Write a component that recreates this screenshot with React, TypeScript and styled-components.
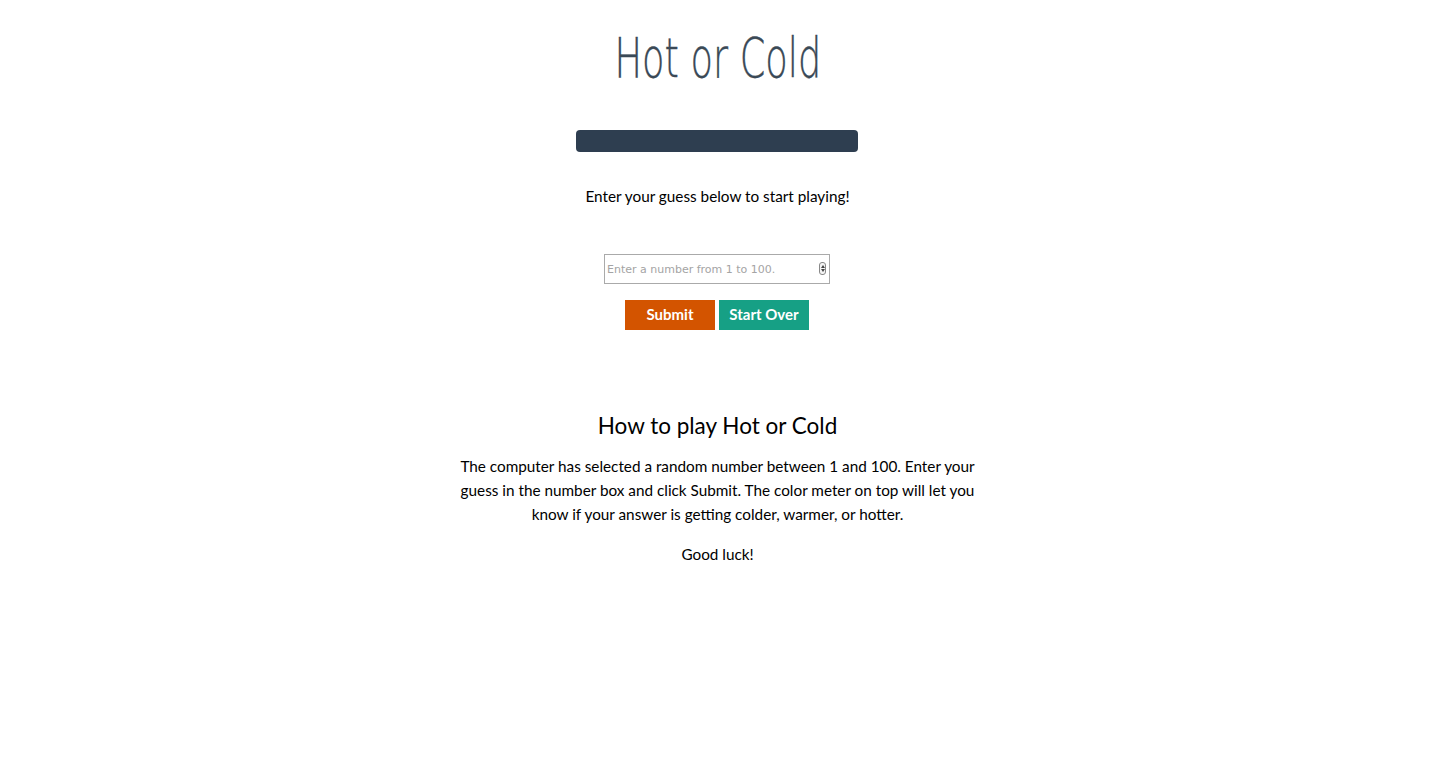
import React from "react";
import styled, { createGlobalStyle } from "styled-components";

const Global = createGlobalStyle`
  html, body { margin: 0; padding: 0; background: #fff; }
  body { font-family: "Lato", "Open Sans", sans-serif; color: #000; }
`;

const Page = styled.main`
  display: flex;
  flex-direction: column;
  align-items: center;
  text-align: center;
`;

const Title = styled.h1`
  margin: 26px 0 0;
  font-family: "DejaVu Sans ExtraLight", "DejaVu Sans", sans-serif;
  font-weight: 200;
  font-size: 56px;
  line-height: 64px;
  color: #3a4956;
  transform: scaleX(0.655);
  white-space: nowrap;
  -webkit-text-stroke: 0.4px #3a4956;
`;

const Meter = styled.div`
  margin: 40px 0 0 -1px;
  width: 282px;
  height: 22px;
  border-radius: 4px;
  background: #2e3e50;
`;

const Feedback = styled.p`
  margin: 33px 0 0;
  font-size: 15.3px;
  line-height: 22px;
`;

const Form = styled.form`
  margin-top: 47px;
  display: flex;
  flex-direction: column;
  align-items: center;
  gap: 16px;
`;

const InputWrap = styled.div`
  position: relative;
  width: 226px;
  height: 30px;
  margin-left: -1px;
`;

const NumberInput = styled.input`
  box-sizing: border-box;
  width: 100%;
  height: 100%;
  border: 1px solid #aaa;
  padding: 0 22px 0 2px;
  font-family: "DejaVu Sans", Verdana, sans-serif;
  font-size: 11px;
  &::placeholder { color: #a4a4a4; }
  &::-webkit-inner-spin-button, &::-webkit-outer-spin-button { -webkit-appearance: none; margin: 0; }
  -moz-appearance: textfield;
`;

const Spinner = styled.span`
  position: absolute;
  right: 4px;
  top: 8px;
  width: 7px;
  height: 13px;
  border: 1px solid #888;
  border-radius: 3px;
  box-sizing: border-box;
  display: flex;
  flex-direction: column;
  align-items: center;
  justify-content: center;
  gap: 1px;
  background: #f4f4f4;
`;

const Tri = styled.i<{ $up?: boolean }>`
  width: 0;
  height: 0;
  border-left: 2px solid transparent;
  border-right: 2px solid transparent;
  ${(p) => (p.$up ? "border-bottom: 3px solid #444;" : "border-top: 3px solid #444;")}
`;

const Buttons = styled.div`
  display: flex;
  gap: 4px;
  margin-left: -1px;
`;

const Button = styled.button<{ $color: string }>`
  width: 90px;
  height: 30px;
  border: none;
  background: ${(p) => p.$color};
  color: #fff;
  font-family: "Lato", "Open Sans", sans-serif;
  font-weight: 700;
  font-size: 15px;
  padding: 0 0 2px;
  cursor: pointer;
`;

const Instructions = styled.section`
  margin-top: 82px;
  width: 530px;
`;

const Heading = styled.h2`
  margin: 0;
  font-size: 22.5px;
  font-weight: 400;
  line-height: 28px;
`;

const Para = styled.p<{ $gap?: number }>`
  margin: ${(p) => p.$gap ?? 12}px 0 0;
  font-size: 15.3px;
  line-height: 24px;
`;

export default function App() {
  return (
    <>
      <Global />
      <Page>
        <Title>Hot or Cold</Title>
        <Meter />
        <Feedback>Enter your guess below to start playing!</Feedback>
        <Form onSubmit={(e) => e.preventDefault()}>
          <InputWrap>
            <NumberInput type="number" placeholder="Enter a number from 1 to 100." />
            <Spinner>
              <Tri $up />
              <Tri />
            </Spinner>
          </InputWrap>
          <Buttons>
            <Button $color="#d35400" type="submit">Submit</Button>
            <Button $color="#16a085" type="button">Start Over</Button>
          </Buttons>
        </Form>
        <Instructions>
          <Heading>How to play Hot or Cold</Heading>
          <Para $gap={14}>
            The computer has selected a random number between 1 and 100. Enter your guess in the
            number box and click Submit. The color meter on top will let you know if your answer is
            getting colder, warmer, or hotter.
          </Para>
          <Para $gap={16}>Good luck!</Para>
        </Instructions>
      </Page>
    </>
  );
}
